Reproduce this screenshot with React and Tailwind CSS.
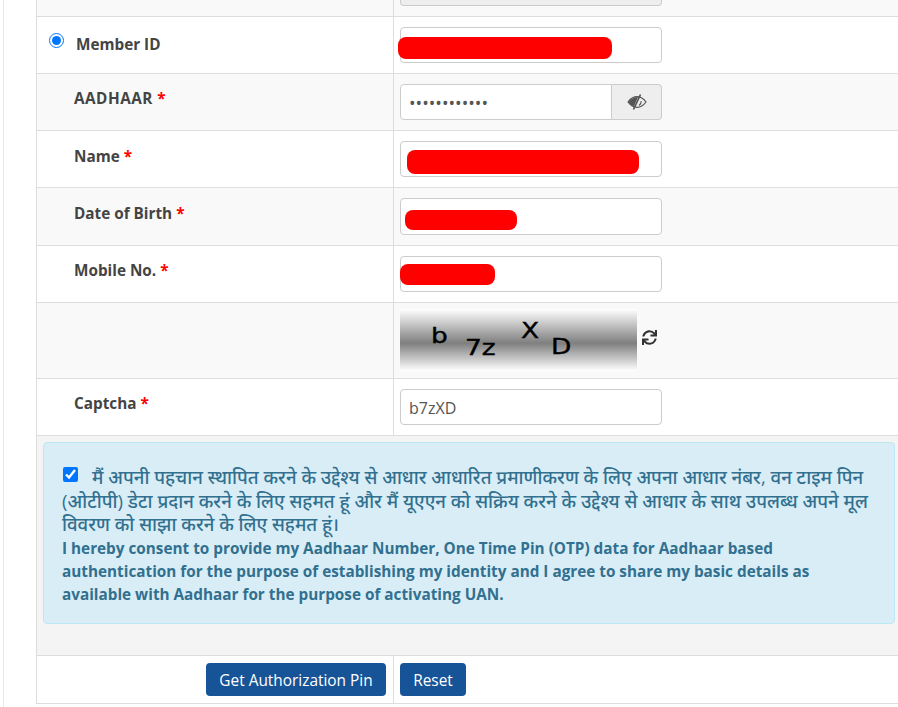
import { FaSync } from 'react-icons/fa';

const Row = ({ shade, height = 'h-[57px]', label, children }) => (
    <div className={`flex border-b border-[#ddd] ${height} ${shade ? 'bg-[#f9f9f9]' : 'bg-white'}`}>
        <div className="w-[357px] shrink-0 border-r border-[#ddd]">{label}</div>
        <div className="flex-1 pl-[6px]">{children}</div>
    </div>
);

const Label = ({ children, required, className = '' }) => (
    <div className={`pl-[37px] pt-[14px] text-[15.3px] font-bold leading-[21px] text-[#444] ${className}`}>
        {children} {required && <span className="text-[#f00]">*</span>}
    </div>
);

const Field = ({ value, className = '' }) => (
    <input
        readOnly
        value={value}
        className={`h-[36px] w-[262px] rounded-[4px] border border-[#ccc] bg-white px-2 pt-[2px] text-[16px] text-[#555] outline-none ${className}`}
    />
);

// covers up personal data in the screenshot
const Redact = ({ className }) => <div className={`absolute rounded-[8px] bg-[#f00] ${className}`} />;

const EyeSlash = () => (
    <svg width="20" height="16" viewBox="0 0 20 16" className="text-[#555]">
        <path d="M1 8C4 4 7 2.7 10 2.7S16 4 19 8C16 12 13 13.3 10 13.3S4 12 1 8Z" fill="none" stroke="currentColor" strokeWidth="1.2" />
        <path d="M1.5 8C3.5 5 7 3 11 3L7 12.5C4.5 11.5 3 10 1.5 8Z" fill="currentColor" />
        <path d="M13.5 .5L6.5 15.5" stroke="currentColor" strokeWidth="1.7" />
        <path d="M12 11.5C13.5 10.5 14.3 9 14.2 7" fill="none" stroke="currentColor" strokeWidth="1.1" />
    </svg>
);

export default function App() {
    return (
        <div className="h-[707px] w-[898px] overflow-hidden bg-white font-['Open_Sans','Noto_Sans','Noto_Sans_Devanagari',sans-serif]">
            <div className="ml-[3px] h-full border-l border-[#e8e8e8] pl-[32px]">
                <div className="border-l border-[#ddd]">
                    {/* previous row, cut off by the page top */}
                    <div className="flex h-[17px] border-b border-[#ddd] bg-[#f9f9f9]">
                        <div className="w-[357px] shrink-0 border-r border-[#ddd]" />
                        <div className="flex-1 pl-[6px]">
                            <div className="h-[6px] w-[262px] rounded-b-[4px] border border-t-0 border-[#ccc] bg-[#eee]" />
                        </div>
                    </div>

                    <Row
                        label={
                            <div className="flex items-start pl-[12px] pt-[16px]">
                                <input type="radio" readOnly checked className="h-[15px] w-[15px] accent-[#0075ff]" />
                                <span className="ml-[12px] mt-[1px] text-[15.3px] font-bold leading-[21px] text-[#444]">Member ID</span>
                            </div>
                        }
                    >
                        <div className="relative pt-[10px]">
                            <Field value="" />
                            <Redact className="left-[-2px] top-[20px] h-[22px] w-[214px]" />
                        </div>
                    </Row>

                    <Row shade label={<Label required className="tracking-[0.5px]">AADHAAR</Label>}>
                        <div className="flex pt-[10px]">
                            <input
                                readOnly
                                type="password"
                                value="123456789012"
                                className="h-[36px] w-[212px] rounded-l-[4px] border border-[#ccc] bg-white px-2 pt-[2px] text-[17.5px] text-[#555] outline-none"
                            />
                            <div className="flex h-[36px] w-[50px] items-center justify-center rounded-r-[4px] border border-l-0 border-[#ccc] bg-[#eee]">
                                <EyeSlash />
                            </div>
                        </div>
                    </Row>

                    <Row label={<div className="pt-px"><Label required>Name</Label></div>}>
                        <div className="relative pt-[10px]">
                            <Field value="" />
                            <Redact className="left-[7px] top-[19px] h-[24px] w-[232px]" />
                        </div>
                    </Row>

                    <Row shade height="h-[58px]" label={<div className="pt-px"><Label required>Date of Birth</Label></div>}>
                        <div className="relative pt-[10px]">
                            <Field value="" className="h-[37px]" />
                            <Redact className="left-[5px] top-[22px] h-[20px] w-[112px]" />
                        </div>
                    </Row>

                    <Row label={<Label required>Mobile No.</Label>}>
                        <div className="relative pt-[10px]">
                            <Field value="" />
                            <Redact className="left-0 top-[18px] h-[21px] w-[95px]" />
                        </div>
                    </Row>

                    <Row shade height="h-[76px]">
                        <div className="flex items-start pt-[6px]">
                            <div className="relative h-[62px] w-[237px] bg-[linear-gradient(to_bottom,#fff_0%,#7f7f7f_55%,#fff_100%)] font-['DejaVu_Sans',sans-serif] text-[22px] text-black [-webkit-text-stroke:0.4px_black]">
                                <span className="absolute left-[31px] top-[10px] origin-left scale-x-[1.2]">b</span>
                                <span className="absolute left-[65px] top-[22px] origin-left scale-x-[1.2]">7z</span>
                                <span className="absolute left-[121px] top-[5px] origin-left scale-x-[1.2]">X</span>
                                <span className="absolute left-[151px] top-[21px] origin-left scale-x-[1.2]">D</span>
                            </div>
                            <FaSync size={15} className="ml-[5px] mt-[21px] text-[#333]" />
                        </div>
                    </Row>

                    <Row label={<Label required>Captcha</Label>}>
                        <div className="pt-[10px]">
                            <Field value="b7zXD" />
                        </div>
                    </Row>

                    {/* consent */}
                    <div className="h-[220px] border-b border-[#ddd] bg-[#f4f4f4] pl-[6px] pt-[6px]">
                        <div className="h-[182px] w-[852px] rounded-[4px] border border-[#bce8f1] bg-[#d9edf7] pl-[18px] pr-[16px] pt-[22px] text-[#31708f]">
                            <div className="text-[18.6px] font-medium leading-[23.5px]">
                                <input type="checkbox" readOnly checked className="ml-px mr-[14px] h-[15px] w-[15px] align-[2px] accent-[#0075ff]" />
                                मैं अपनी पहचान स्थापित करने के उद्देश्य से आधार आधारित प्रमाणीकरण के लिए अपना आधार नंबर, वन टाइम पिन (ओटीपी) डेटा प्रदान करने के लिए सहमत हूं और मैं यूएएन को सक्रिय करने के उद्देश्य से आधार के साथ उपलब्ध अपने मूल विवरण को साझा करने के लिए सहमत हूं।
                            </div>
                            <div className="mt-[1.5px] w-[770px] text-[15.3px] font-bold leading-[23px]">
                                I hereby consent to provide my Aadhaar Number, One Time Pin (OTP) data for Aadhaar based authentication for the purpose of establishing my identity and I agree to share my basic details as available with Aadhaar for the purpose of activating UAN.
                            </div>
                        </div>
                    </div>

                    {/* actions */}
                    <div className="flex h-[48px] border-b border-[#ddd] bg-white">
                        <div className="flex w-[357px] shrink-0 justify-end border-r border-[#ddd] pr-[7px] pt-[7px]">
                            <button className="h-[33px] w-[180px] rounded-[4px] bg-[#175497] pt-[2px] text-[15.4px] text-white">Get Authorization Pin</button>
                        </div>
                        <div className="pl-[6px] pt-[7px]">
                            <button className="h-[33px] w-[66px] rounded-[4px] bg-[#175497] pt-[2px] text-[15.4px] text-white">Reset</button>
                        </div>
                    </div>
                </div>
            </div>
        </div>
    );
}
